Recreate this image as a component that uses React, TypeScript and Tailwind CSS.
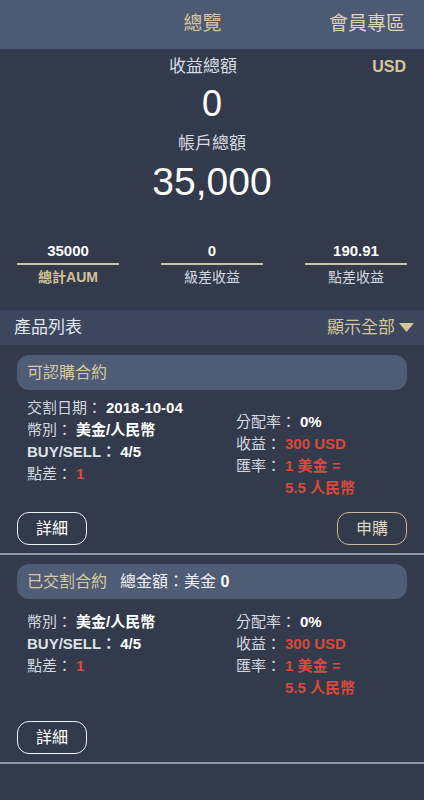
const FONT = { fontFamily: '"Liberation Sans", "Noto Sans CJK TC", sans-serif' };

const STATS = [
  { value: "35000", label: "總計AUM", gold: true },
  { value: "0", label: "級差收益", gold: false },
  { value: "190.91", label: "點差收益", gold: false },
];

function Row({
  label,
  bold,
  children,
}: {
  label: string;
  bold?: boolean;
  children: React.ReactNode;
}) {
  return (
    <div className="flex text-[15px] leading-[22px]">
      <span className={bold ? "shrink-0 font-bold text-[#dde1e8]" : "shrink-0 text-[#d3d8e0]"}>
        {label}：
      </span>
      <span className="ml-1 font-bold text-white">{children}</span>
    </div>
  );
}

function Red({ children }: { children: React.ReactNode }) {
  return <span className="font-bold text-[#d94a3a]">{children}</span>;
}

function RightCol({ className = "" }: { className?: string }) {
  return (
    <div className={className}>
      <Row label="分配率">0%</Row>
      <Row label="收益">
        <Red>300 USD</Red>
      </Row>
      <Row label="匯率">
        <Red>
          1 美金 =
          <br />
          5.5 人民幣
        </Red>
      </Row>
    </div>
  );
}

function PillButton({ children, gold }: { children: React.ReactNode; gold?: boolean }) {
  return (
    <button
      type="button"
      className={
        gold
          ? "h-[33px] w-[70px] rounded-[12px] border-[1.5px] border-[#c7b994] text-[16px] text-[#ddd4bc]"
          : "h-[33px] w-[70px] rounded-[12px] border-[1.5px] border-[#eef1f5] text-[16px] text-white"
      }
    >
      {children}
    </button>
  );
}

export default function App() {
  return (
    <div className="min-h-[800px] w-[424px] bg-[#323a4b]" style={FONT}>
      {/* top bar */}
      <div className="grid h-[49px] grid-cols-3 items-center bg-[#4d5a73] pr-[19px]">
        <span />
        <span className="text-center text-[19px] text-[#d5c59b]">總覽</span>
        <span className="text-right text-[19px] text-[#ddd2b4]">會員專區</span>
      </div>

      {/* totals */}
      <div className="pt-[6px]">
        <div className="grid grid-cols-3 items-center pr-[18px] leading-[24px]">
          <span />
          <span className="text-center text-[17px] text-[#d6dbe3]">收益總額</span>
          <span className="text-right text-[16px] font-bold text-[#d8c69c]">USD</span>
        </div>
        <div className="mt-[5px] text-center text-[36px] leading-[40px] text-white">0</div>
        <div className="mt-[8px] text-center text-[17px] leading-[24px] text-[#d6dbe3]">帳戶總額</div>
        <div className="mt-[4px] text-center text-[39px] leading-[44px] text-white">35,000</div>
      </div>

      {/* stats */}
      <div className="mt-[37px] grid grid-cols-3 gap-[42px] px-[17px]">
        {STATS.map((s) => (
          <div key={s.label} className="flex flex-col items-center">
            <span className="text-[15px] font-bold leading-[20px] text-white">{s.value}</span>
            <span className="mt-[2px] h-[2px] w-full bg-[#c9c0a6]" />
            <span
              className={
                s.gold
                  ? "mt-[2px] text-[14px] font-semibold leading-[20px] text-[#d3c297]"
                  : "mt-[2px] text-[14px] leading-[20px] text-[#d3d8e0]"
              }
            >
              {s.label}
            </span>
          </div>
        ))}
      </div>

      {/* product list bar */}
      <div className="mt-[23px] flex h-[35px] items-center justify-between bg-[#3c475e] pl-[14px] pr-[10px]">
        <span className="text-[17px] text-[#e1e5ec]">產品列表</span>
        <span className="flex items-center gap-[4px] text-[17px] text-[#d5c59b]">
          顯示全部
          <svg width="15" height="10" viewBox="0 0 15 10">
            <path d="M0 0 H15 L7.5 9 Z" fill="#d5c59b" />
          </svg>
        </span>
      </div>

      {/* card 1 */}
      <div className="px-[17px] pt-[10px]">
        <div className="flex h-[35px] items-center rounded-[12px] bg-[#4f5c76] pl-[10px] text-[16px] text-[#d8c9a2]">
          可認購合約
        </div>
        <div className="mt-[7px] flex items-start">
          <div className="w-[219px] shrink-0 pl-[10px]">
            <Row label="交割日期">2018-10-04</Row>
            <Row label="幣別">美金/人民幣</Row>
            <Row label="BUY/SELL" bold>
              4/5
            </Row>
            <Row label="點差">
              <Red>1</Red>
            </Row>
          </div>
          <RightCol className="mt-[14px]" />
        </div>
        <div className="mt-[13px] flex justify-between">
          <PillButton>詳細</PillButton>
          <PillButton gold>申購</PillButton>
        </div>
      </div>
      <div className="mt-[8px] h-[2px] bg-[#9099a6]" />

      {/* card 2 */}
      <div className="px-[17px] pt-[9px]">
        <div className="flex h-[35px] items-center gap-[13px] rounded-[12px] bg-[#4f5c76] pl-[10px] text-[16px]">
          <span className="text-[#d8c9a2]">已交割合約</span>
          <span className="text-[#eef1f5]">
            總金額：美金 <span className="font-bold text-white">0</span>
          </span>
        </div>
        <div className="mt-[12px] flex items-start">
          <div className="w-[219px] shrink-0 pl-[10px]">
            <Row label="幣別">美金/人民幣</Row>
            <Row label="BUY/SELL" bold>
              4/5
            </Row>
            <Row label="點差">
              <Red>1</Red>
            </Row>
          </div>
          <RightCol />
        </div>
        <div className="mt-[22px] flex">
          <PillButton>詳細</PillButton>
        </div>
      </div>
      <div className="mt-[8px] h-[2px] bg-[#9099a6]" />
    </div>
  );
}
